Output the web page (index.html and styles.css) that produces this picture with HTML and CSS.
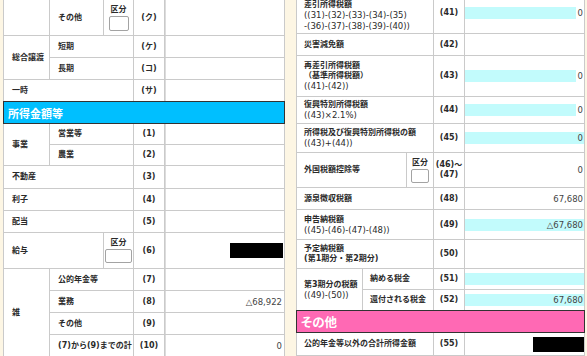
FILE: index.html
```html
<!DOCTYPE html>
<html lang="ja">
<head>
<meta charset="utf-8">
<link rel="stylesheet" href="styles.css">
</head>
<body>
<div class="page">
  <div class="grid lt">
    <div class="c"></div>
    <div class="c lbl">その他</div>
    <div class="c kb"><span class="kbt">区分</span><span class="box b20"></span></div>
    <div class="c num">(ク)</div>
    <div class="c val"></div>

    <div class="c lbl r2">総合譲渡</div>
    <div class="c lbl s2">短期</div>
    <div class="c num">(ケ)</div>
    <div class="c val"></div>
    <div class="c lbl s2">長期</div>
    <div class="c num">(コ)</div>
    <div class="c val"></div>

    <div class="c lbl s3">一時</div>
    <div class="c num">(サ)</div>
    <div class="c val"></div>

    <div class="c head blue s5">所得金額等</div>

    <div class="c lbl r2">事業</div>
    <div class="c lbl s2">営業等</div>
    <div class="c num">(1)</div>
    <div class="c val"></div>
    <div class="c lbl s2">農業</div>
    <div class="c num">(2)</div>
    <div class="c val"></div>

    <div class="c lbl s3">不動産</div>
    <div class="c num">(3)</div>
    <div class="c val"></div>
    <div class="c lbl s3">利子</div>
    <div class="c num">(4)</div>
    <div class="c val"></div>
    <div class="c lbl s3">配当</div>
    <div class="c num">(5)</div>
    <div class="c val"></div>

    <div class="c lbl s2">給与</div>
    <div class="c kb"><span class="kbt">区分</span><span class="box b27"></span></div>
    <div class="c num">(6)</div>
    <div class="c val"><span class="mask m53"></span></div>

    <div class="c lbl r4">雑</div>
    <div class="c lbl s2">公的年金等</div>
    <div class="c num">(7)</div>
    <div class="c val"></div>
    <div class="c lbl s2">業務</div>
    <div class="c num">(8)</div>
    <div class="c val">△68,922</div>
    <div class="c lbl s2">その他</div>
    <div class="c num">(9)</div>
    <div class="c val"></div>
    <div class="c lbl s2">(7)から(9)までの計</div>
    <div class="c num">(10)</div>
    <div class="c val">0</div>
  </div>

  <div class="grid rt">
    <div class="c lbl s3 col first"><span>差引所得税額</span><span class="f">((31)-(32)-(33)-(34)-(35)</span><span class="f">-(36)-(37)-(38)-(39)-(40))</span></div>
    <div class="c num">(41)</div>
    <div class="c bv"><span class="bar short"></span><span class="out">0</span></div>

    <div class="c lbl s3">災害減免額</div>
    <div class="c num">(42)</div>
    <div class="c bv"></div>

    <div class="c lbl s3 col"><span>再差引所得税額</span><span>（基準所得税額）</span><span class="f">((41)-(42))</span></div>
    <div class="c num">(43)</div>
    <div class="c bv"><span class="bar short"></span><span class="out">0</span></div>

    <div class="c lbl s3 col"><span>復興特別所得税額</span><span class="f">((43)×2.1%)</span></div>
    <div class="c num">(44)</div>
    <div class="c bv"><span class="bar short"></span><span class="out">0</span></div>

    <div class="c lbl s3 col"><span>所得税及び復興特別所得税の額</span><span class="f">((43)+(44))</span></div>
    <div class="c num">(45)</div>
    <div class="c bv"><span class="bar">0</span></div>

    <div class="c lbl s2">外国税額控除等</div>
    <div class="c kb"><span class="kbt">区分</span><span class="box b18"></span></div>
    <div class="c num col"><span>(46)～</span><span>(47)</span></div>
    <div class="c bv"><span class="plain">0</span></div>

    <div class="c lbl s3">源泉徴収税額</div>
    <div class="c num">(48)</div>
    <div class="c bv"><span class="plain">67,680</span></div>

    <div class="c lbl s3 col"><span>申告納税額</span><span class="f">((45)-(46)-(47)-(48))</span></div>
    <div class="c num">(49)</div>
    <div class="c bv"><span class="bar">△67,680</span></div>

    <div class="c lbl s3 col"><span>予定納税額</span><span>(第1期分・第2期分)</span></div>
    <div class="c num">(50)</div>
    <div class="c bv"></div>

    <div class="c lbl r2 col"><span>第3期分の税額</span><span class="f">((49)-(50))</span></div>
    <div class="c lbl s2">納める税金</div>
    <div class="c num">(51)</div>
    <div class="c bv"><span class="bar"></span></div>
    <div class="c lbl s2">還付される税金</div>
    <div class="c num">(52)</div>
    <div class="c bv"><span class="bar">67,680</span></div>

    <div class="c head pink s5">その他</div>

    <div class="c lbl s3">公的年金等以外の合計所得金額</div>
    <div class="c num">(55)</div>
    <div class="c bv"><span class="mask m51"></span></div>
  </div>
</div>
</body>
</html>
```

FILE: styles.css
```css
html, body {
  margin: 0;
  padding: 0;
}
body {
  background: #fdf6e4;
  width: 587px;
  height: 356px;
  overflow: hidden;
  font-family: "DejaVu Sans", "Noto Sans CJK JP", sans-serif;
  color: #2a2a2a;
}
.page {
  display: flex;
  align-items: flex-start;
  gap: 11px;
  padding-left: 3px;
}
.grid {
  display: grid;
  gap: 1px;
  padding: 1px;
  background: #cacaca;
}
.lt {
  margin-top: -1px;
  grid-template-columns: 45px 53px 29px 30px 119px;
  grid-template-rows: 35px 21px 21px 21px 21px 20px 20px 22px 21px 21px 35px 21px 21px 21px 21px;
}
.rt {
  margin-top: -8px;
  grid-template-columns: 65px 43px 26px 30px 119px;
  grid-template-rows: 40px 21px 40px 26px 28px 34px 21px 29px 28px 20px 20px 21px 22px;
}
.c {
  background: #fff;
  display: flex;
  align-items: center;
  min-width: 0;
  white-space: nowrap;
}
.s2 { grid-column: span 2; }
.s3 { grid-column: span 3; }
.s5 { grid-column: span 5; }
.r2 { grid-row: span 2; }
.r4 { grid-row: span 4; }

.lbl {
  padding-left: 8px;
  font-size: 8px;
  font-weight: bold;
  line-height: 10px;
}
.rt .lbl { padding-left: 7px; }
.col {
  flex-direction: column;
  align-items: flex-start;
  justify-content: center;
}
.col.first {
  justify-content: flex-end;
  padding-bottom: 2px;
  line-height: 10.5px;
}
.f {
  font-weight: normal;
  font-size: 8.5px;
}
.num {
  justify-content: center;
  font-size: 8px;
  font-weight: bold;
  line-height: 10px;
}
.num.col { align-items: center; }
.val {
  justify-content: flex-end;
  padding-right: 2px;
  font-size: 8.5px;
  color: #444;
}
.lt .val { border-left: 1px solid #dcdcdc; }
.bv {
  justify-content: flex-end;
  font-size: 8.5px;
  color: #444;
}
.bar {
  flex: 1;
  height: 12px;
  background: #c2fbfc;
  text-align: right;
  line-height: 12px;
  padding-right: 1px;
}
.bar.short {
  flex: 0 0 110px;
  margin-right: auto;
}
.out, .plain {
  padding-right: 1px;
}
.kb {
  flex-direction: column;
  justify-content: center;
  gap: 2px;
}
.kbt {
  font-size: 8px;
  font-weight: bold;
  line-height: 9px;
}
.box {
  display: block;
  background: #fff;
  border: 1px solid #a3a3a3;
  border-radius: 2px;
  box-sizing: border-box;
}
.b20 { width: 20px; height: 15px; }
.b27 { width: 27px; height: 14px; }
.b18 { width: 18px; height: 14px; }
.mask {
  display: block;
  background: #000;
  height: 15px;
}
.m53 { width: 53px; margin-right: -1px; }
.m51 { width: 51px; }
.head {
  margin: -1px;
  border: 1px solid #333;
  color: #fff;
  font-weight: bold;
  font-size: 11px;
  padding-left: 4px;
}
.blue { background: #00bfff; }
.pink {
  background: #ff69b4;
  font-size: 12.5px;
  font-feature-settings: "palt";
}
```
